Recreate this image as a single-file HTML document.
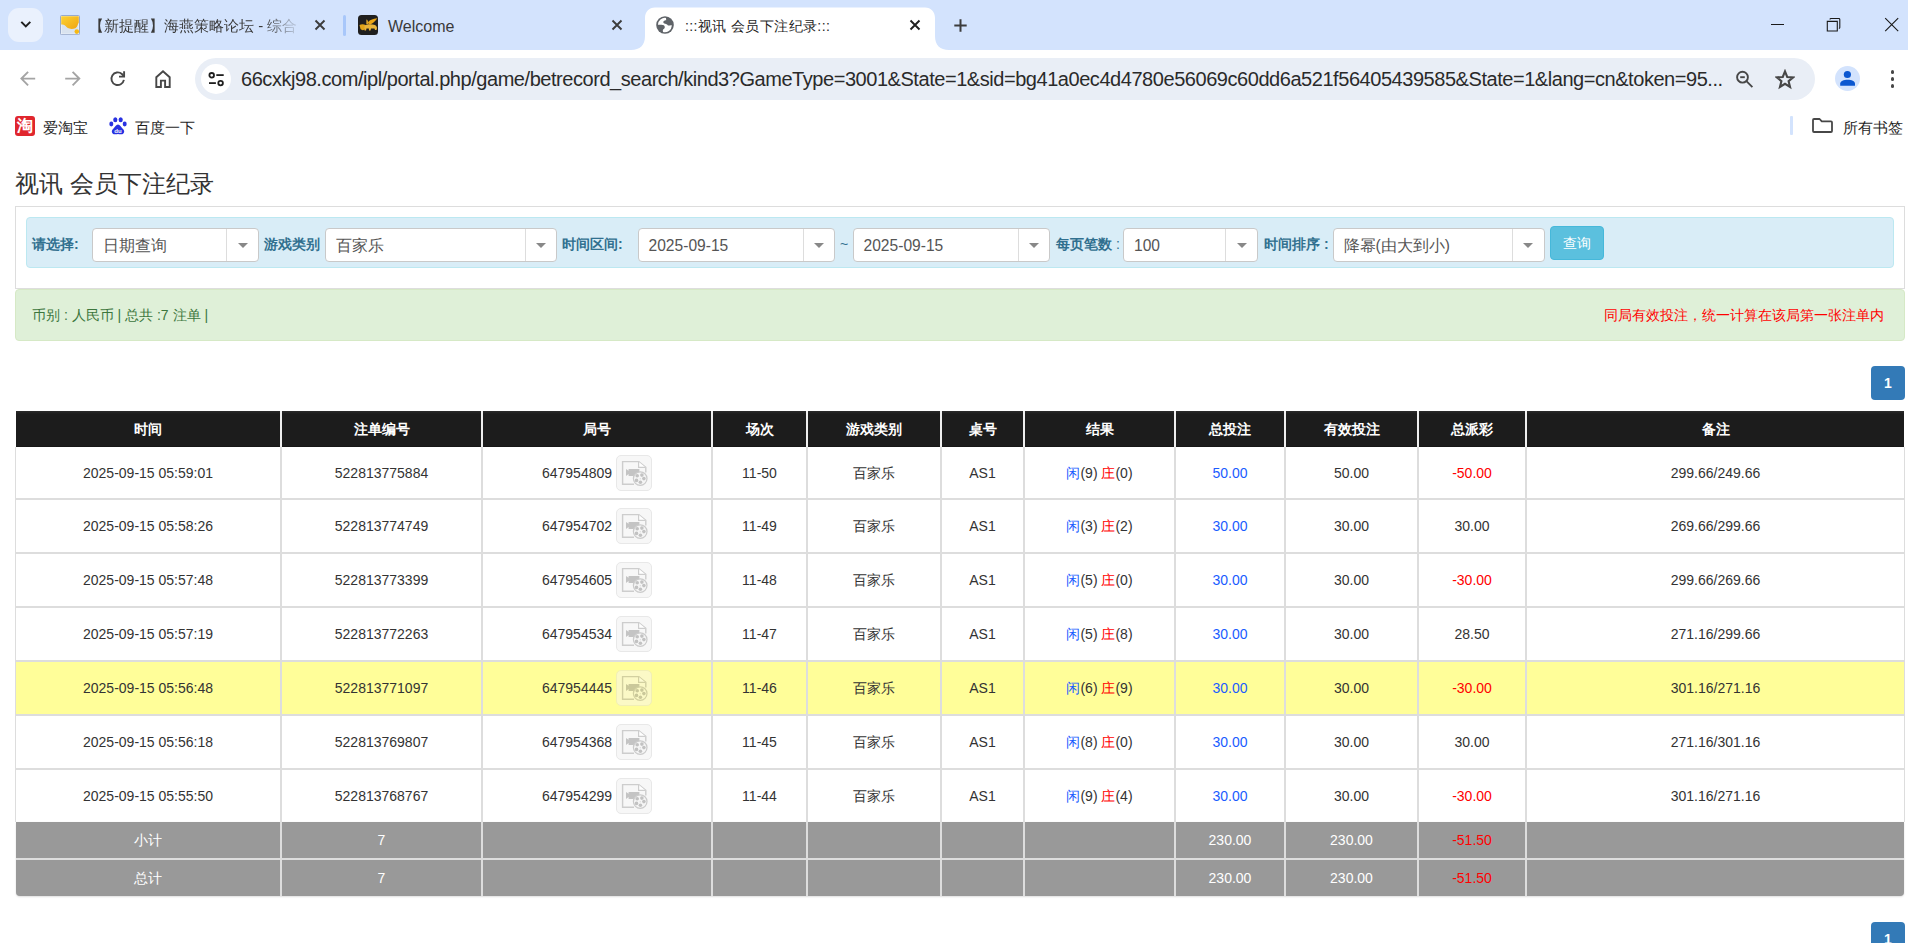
<!DOCTYPE html>
<html><head><meta charset="utf-8">
<style>
*{box-sizing:border-box}
html,body{margin:0;padding:0;width:1908px;height:943px;overflow:hidden;background:#fff;font-family:"Liberation Sans",sans-serif;}
.abs{position:absolute}
svg{display:block}
#tabbar{position:absolute;left:0;top:0;width:1908px;height:50px;background:#d3e3fd}
.tabtxt{position:absolute;font-size:15px;color:#1f1f1f;white-space:nowrap;top:15px;line-height:20px}
.c{position:absolute;text-align:center;font-size:14px;color:#333;white-space:nowrap}
.th{color:#fff;font-weight:bold}
.ft{color:#fff}
.thead{background:linear-gradient(#2b2b2b,#1c1c1c 3px,#1c1c1c 35px,#111 36px)}
.hl{background:#ddd}
.vl{background:#ddd}
.bl{color:#1a5cff}
.rd{color:#f00}
.jn{display:inline-block;vertical-align:middle;position:relative;top:-1px}
.vid{display:inline-block;vertical-align:middle;width:36px;height:36px;margin-left:4px;border:1px solid #e8e8e8;border-radius:5px;background:#f7f7f7;position:relative;top:-1px}
.vid svg{position:absolute;left:-1px;top:-1px}
.lbl{position:absolute;top:236px;font-size:14px;font-weight:bold;color:#31708f;white-space:nowrap;line-height:16px}
.sel{position:absolute;background:#fff;border:1px solid #c9c9c9;border-radius:4px}
.st{position:absolute;left:10px;top:7.5px;font-size:15.6px;color:#555;white-space:nowrap;line-height:17px}
.sd{position:absolute;top:0;bottom:0;width:1px;background:#ddd}
.caret{position:absolute;top:14px;width:0;height:0;border-left:5px solid transparent;border-right:5px solid transparent;border-top:5px solid #888}
.btn{background:#5bc0de;border:1px solid #46b8da;border-radius:4px;color:#fff;font-size:14px;text-align:center;line-height:32px}
.pg{position:absolute;background:#337ab7;border-radius:4px;color:#fff;font-weight:bold;font-size:14px;text-align:center;line-height:34px}
</style></head>
<body>
<div id="tabbar">
  <!-- tab search -->
  <div class="abs" style="left:8px;top:8px;width:35px;height:34px;border-radius:11px;background:#eaf1fd"></div>
  <svg class="abs" style="left:19.5px;top:19px" width="12" height="12" viewBox="0 0 12 12"><path d="M1.3 2.9L5.8 7.4l4.5-4.5" fill="none" stroke="#1f1f1f" stroke-width="2"/></svg>
  <!-- tab1 -->
  <svg class="abs" style="left:60px;top:15px" width="20" height="20" viewBox="0 0 20 20"><defs><linearGradient id="yg" x1="0" y1="0" x2="1" y2="1"><stop offset="0" stop-color="#fcd232"/><stop offset="1" stop-color="#f0a512"/></linearGradient></defs><rect x="0.5" y="0.5" width="19" height="19.2" rx="1" fill="#eef3fa" stroke="#8ea3c6" stroke-width="0.9"/><rect x="1.6" y="8" width="16.8" height="10.6" fill="#d9e3ef"/><path d="M1.2 1.3H18.8V7.5C18.2 8.5 17.8 9.5 17.5 10.5C16.8 13 14.5 13.9 11.5 13.9C8.5 13.9 6.6 12.6 5.6 11.1C4.6 9.9 2.6 9.5 1.2 9.5Z" fill="url(#yg)"/><circle cx="16.8" cy="16.6" r="2.3" fill="#f6b914"/></svg>
  <div class="tabtxt" style="left:89px;top:15.5px;width:212px;overflow:hidden;color:#3a3a3a;-webkit-mask-image:linear-gradient(90deg,#000 82%,rgba(0,0,0,.3) 95%,transparent 100%)">【新提醒】海燕策略论坛 - 综合</div>
  <svg class="abs" style="left:314px;top:19px" width="12" height="12" viewBox="0 0 12 12"><path d="M1.5 1.5l9 9M10.5 1.5l-9 9" stroke="#3c3c3c" stroke-width="1.9"/></svg>
  <div class="abs" style="left:343px;top:15px;width:3px;height:21px;border-radius:2px;background:#a8c7fa"></div>
  <!-- tab2 -->
  <svg class="abs" style="left:358px;top:15px" width="20" height="20" viewBox="0 0 20 20"><rect x="0" y="0" width="20" height="20" rx="3.5" fill="#1f1f1f"/><g fill="#e0a41a"><path d="M9.5 8C11 5 15 3.8 19.3 3.3C17.5 6 15 8.5 12 9.5Z" fill="#eaa516"/><path d="M1.5 10C3 9 6 9 7.5 10L7.5 14C6 15.5 3.5 15.5 2.5 14Z"/><path d="M6.5 10.5C9 9 14 9 17 10C19 11 19.5 13 18.5 15L17 15L16.5 13.5L13 13.5L12.5 15.5L11 15.5L10.8 13.5L8.5 13.5L8 15.5L6.5 15.5Z" fill="#e8b43a"/><path d="M8.3 4.5C9.5 4.5 10.5 6 10 9L8.3 9Z" fill="#d9a52a"/></g></svg>
  <div class="tabtxt" style="left:388px;top:16.5px;font-size:16px;color:#3a3a3a">Welcome</div>
  <svg class="abs" style="left:611px;top:19px" width="12" height="12" viewBox="0 0 12 12"><path d="M1.5 1.5l9 9M10.5 1.5l-9 9" stroke="#3c3c3c" stroke-width="1.9"/></svg>
  <!-- active tab -->
  <svg class="abs" style="left:631px;top:7px" width="335" height="43" viewBox="0 0 335 43"><path d="M0 43c9 0 14-5 14-14V11c0-6 4-10.5 10-10.5h270c6 0 10 4.5 10 10.5v18c0 9 5 14 14 14z" fill="#fff"/></svg>
  <svg class="abs" style="left:656px;top:16px" width="18" height="18" viewBox="0 0 18 18"><circle cx="9" cy="9" r="8.8" fill="#5f6368"/><path d="M10 1.9L10.2 4.3C9 4.3 7.3 4.8 7.3 6.3C7.3 7.5 9 7.8 10.5 8.2C11.5 8.5 11.5 9.5 12.8 9.6C14 9.7 14.5 9 15.9 9.6A7.2 7.2 0 0 1 7 16.1L6.8 14.2C6.8 13 8.8 13.2 8.8 11.3C8.8 9.5 7.3 8.8 5.5 8.8L1.9 8.8A7.2 7.2 0 0 1 10 1.9Z" fill="#fff"/></svg>
  <div class="tabtxt" style="left:685px;font-size:14px;letter-spacing:0.4px;top:16px">:::视讯 会员下注纪录:::</div>
  <svg class="abs" style="left:909px;top:19px" width="12" height="12" viewBox="0 0 12 12"><path d="M1.5 1.5l9 9M10.5 1.5l-9 9" stroke="#1f1f1f" stroke-width="1.9"/></svg>
  <svg class="abs" style="left:954px;top:19px" width="13" height="13" viewBox="0 0 13 13"><path d="M6.5 0.3v12.4M0.3 6.5h12.4" stroke="#3c3c3c" stroke-width="2"/></svg>
  <!-- window controls -->
  <div class="abs" style="left:1771px;top:24px;width:13px;height:1px;background:#1a1a1a"></div>
  <svg class="abs" style="left:1826px;top:17px" width="16" height="16" viewBox="0 0 16 16"><path d="M1.3 4.4h10v9.6h-10z" fill="none" stroke="#1a1a1a" stroke-width="1.1"/><path d="M4 2.4c0-.5.4-.9.9-.9h8c.5 0 .9.4.9.9v8.1c0 .5-.4.9-.9.9" fill="none" stroke="#1a1a1a" stroke-width="1.1"/></svg>
  <svg class="abs" style="left:1884px;top:17px" width="16" height="16" viewBox="0 0 16 16"><path d="M1.2 1.2l13 13M14.2 1.2l-13 13" stroke="#1a1a1a" stroke-width="1.1"/></svg>
</div>
<!-- toolbar -->
<div class="abs" style="left:0;top:50px;width:1908px;height:58px;background:#fff;border-top-left-radius:10px"></div>
<svg class="abs" style="left:19px;top:70px" width="18" height="18" viewBox="0 0 18 18"><path d="M16.2 8.6H3.2M9.1 1.9L2.4 8.6l6.7 6.7" fill="none" stroke="#a4a4a4" stroke-width="1.9"/></svg>
<svg class="abs" style="left:63px;top:70px" width="18" height="18" viewBox="0 0 18 18"><path d="M2.2 8.6h13M9.6 1.9l6.7 6.7-6.7 6.7" fill="none" stroke="#a4a4a4" stroke-width="1.9"/></svg>
<svg class="abs" style="left:108px;top:70px" width="18" height="18" viewBox="0 0 18 18"><path d="M15.9 9.9A6.3 6.3 0 1 1 13.9 4L16 6.3" fill="none" stroke="#474747" stroke-width="1.9"/><path d="M16.1 1.2V6.6H11" fill="none" stroke="#474747" stroke-width="1.9" stroke-linejoin="miter"/></svg>
<svg class="abs" style="left:153.5px;top:69px" width="18" height="20" viewBox="0 0 18 20"><path d="M2.3 18V8.2L9 2.2l6.7 6V18h-4.6v-6.4H6.9V18z" fill="none" stroke="#474747" stroke-width="1.9" stroke-linejoin="miter"/></svg>
<div class="abs" style="left:195px;top:58px;width:1620px;height:42px;border-radius:21px;background:#e9eef6"></div>
<div class="abs" style="left:201px;top:64px;width:30px;height:30px;border-radius:50%;background:#fff"></div>
<svg class="abs" style="left:207px;top:71px" width="18" height="16" viewBox="0 0 18 16"><circle cx="4.7" cy="4.3" r="2.3" fill="none" stroke="#1f1f1f" stroke-width="1.8"/><path d="M9.3 4.1h7.4" stroke="#1f1f1f" stroke-width="1.8"/><circle cx="13.6" cy="12.1" r="2.3" fill="none" stroke="#1f1f1f" stroke-width="1.8"/><path d="M2 12.1h6.9" stroke="#1f1f1f" stroke-width="1.8"/></svg>
<div class="abs" id="url" style="left:241px;top:68px;font-size:20px;letter-spacing:-0.45px;line-height:22px;color:#2a2a2a;white-space:nowrap">66cxkj98.com/ipl/portal.php/game/betrecord_search/kind3?GameType=3001&amp;State=1&amp;sid=bg41a0ec4d4780e56069c60dd6a521f56405439585&amp;State=1&amp;lang=cn&amp;token=95...</div>
<svg class="abs" style="left:1735px;top:70px" width="20" height="20" viewBox="0 0 20 20"><circle cx="7.5" cy="7.2" r="5.4" fill="none" stroke="#474747" stroke-width="1.9"/><path d="M5.2 7.2h4.6" stroke="#474747" stroke-width="1.9"/><path d="M11.4 11.1l6 6.1" stroke="#474747" stroke-width="1.9"/></svg>
<svg class="abs" style="left:1775px;top:69px" width="20" height="21" viewBox="0 0 20 21"><path d="M10.00 2.40 L12.22 7.94 L18.18 8.34 L13.60 12.17 L15.05 17.96 L10.00 14.78 L4.95 17.96 L6.40 12.17 L1.82 8.34 L7.78 7.94Z" fill="none" stroke="#474747" stroke-width="2.1" stroke-linejoin="miter" stroke-miterlimit="10"/></svg>
<div class="abs" style="left:1835px;top:66px;width:25px;height:25px;border-radius:50%;background:#d3e3fd"></div>
<svg class="abs" style="left:1838px;top:69px" width="19" height="19" viewBox="0 0 19 19"><circle cx="9.4" cy="5.5" r="3.6" fill="#0b57d0"/><path d="M2.2 16.8V14.6C2.2 12.2 5.8 10.8 9.6 10.8S17 12.2 17 14.6V16.8Z" fill="#0b57d0"/></svg>
<div class="abs" style="left:1890.6px;top:70.1px;width:3.9px;height:3.9px;border-radius:50%;background:#474747"></div>
<div class="abs" style="left:1890.6px;top:76.9px;width:3.9px;height:3.9px;border-radius:50%;background:#474747"></div>
<div class="abs" style="left:1890.6px;top:83.7px;width:3.9px;height:3.9px;border-radius:50%;background:#474747"></div>
<!-- bookmarks -->
<div class="abs" style="left:15px;top:116px;width:20px;height:20px;border-radius:3px;background:#e0262d;color:#fff;font-size:16px;font-weight:bold;line-height:20px;text-align:center;overflow:hidden">淘</div>
<div class="abs" style="left:43px;top:118.5px;font-size:15px;line-height:18px;color:#1f1f1f">爱淘宝</div>
<svg class="abs" style="left:109px;top:117px" width="18" height="18" viewBox="0 0 18 18"><ellipse cx="2.3" cy="7" rx="2" ry="2.4" fill="#2932e1"/><ellipse cx="6.3" cy="2.8" rx="2.1" ry="2.5" fill="#2932e1"/><ellipse cx="11.7" cy="2.8" rx="2.1" ry="2.5" fill="#2932e1"/><ellipse cx="15.7" cy="7" rx="2" ry="2.4" fill="#2932e1"/><path d="M9 7.5c2 0 3 2.5 4.5 4s2 2.5 1.5 4c-.5 1.6-2 2-3.5 1.8c-1-.1-1.7-.4-2.5-.4s-1.5.3-2.5.4C5 17.5 3.5 17 3 15.5s0-2.5 1.5-4S7 7.5 9 7.5z" fill="#2932e1"/><text x="9" y="16" font-size="6" font-family="Liberation Sans" font-weight="bold" fill="#fff" text-anchor="middle">du</text></svg>
<div class="abs" style="left:135px;top:118.5px;font-size:15px;line-height:18px;color:#1f1f1f">百度一下</div>
<div class="abs" style="left:1790px;top:116px;width:2.5px;height:19px;border-radius:1px;background:#d3e3fd"></div>
<svg class="abs" style="left:1812px;top:118px" width="21" height="17" viewBox="0 0 21 17"><path d="M1 2c0-.6.4-1 1-1h5.6l2.2 2.4H19c.6 0 1 .4 1 1V13c0 .6-.4 1-1 1H2c-.6 0-1-.4-1-1z" fill="none" stroke="#474747" stroke-width="1.8" stroke-linejoin="round"/></svg>
<div class="abs" style="left:1843px;top:118.5px;font-size:15px;line-height:18px;color:#1f1f1f">所有书签</div>

<!-- page -->
<div class="abs" style="left:15px;top:170px;font-size:24px;line-height:28px;color:#333;white-space:nowrap">视讯 会员下注纪录</div>
<div class="abs" style="left:15px;top:206px;width:1890px;height:83px;border:1px solid #ddd"></div>
<div class="abs" style="left:26px;top:217px;width:1868px;height:51px;border:1px solid #bce8f1;background:#d9edf7;border-radius:4px"></div>
<div class="lbl" style="left:32px">请选择:</div>
<div class="sel" style="left:92px;top:228px;width:167px;height:34px"><span class="st">日期查询</span><span class="sd" style="left:133px"></span><span class="caret" style="left:144.5px"></span></div>
<div class="lbl" style="left:264px">游戏类别</div>
<div class="sel" style="left:324.5px;top:228px;width:232.5px;height:34px"><span class="st">百家乐</span><span class="sd" style="left:199.0px"></span><span class="caret" style="left:210.25px"></span></div>
<div class="lbl" style="left:562px">时间区间:</div>
<div class="sel" style="left:637.5px;top:228px;width:197.5px;height:34px"><span class="st">2025-09-15</span><span class="sd" style="left:164.0px"></span><span class="caret" style="left:175.25px"></span></div>
<div class="abs" style="left:840px;top:236px;font-size:14px;color:#31708f">~</div>
<div class="sel" style="left:852.5px;top:228px;width:197.5px;height:34px"><span class="st">2025-09-15</span><span class="sd" style="left:164.0px"></span><span class="caret" style="left:175.25px"></span></div>
<div class="lbl" style="left:1056px">每页笔数 <span style="font-weight:normal">:</span></div>
<div class="sel" style="left:1123px;top:228px;width:135px;height:34px"><span class="st">100</span><span class="sd" style="left:101px"></span><span class="caret" style="left:112.5px"></span></div>
<div class="lbl" style="left:1264px">时间排序 :</div>
<div class="sel" style="left:1332.5px;top:228px;width:212.0px;height:34px"><span class="st">降幂(由大到小)</span><span class="sd" style="left:178.0px"></span><span class="caret" style="left:189.5px"></span></div>
<div class="abs btn" style="left:1550px;top:226px;width:54px;height:34px">查询</div>
<div class="abs" style="left:15px;top:289px;width:1890px;height:52px;border:1px solid #d6e9c6;background:#dff0d8;border-radius:4px"></div>
<div class="abs" style="left:32px;top:307px;font-size:14px;line-height:16px;color:#3c763d;white-space:nowrap">币别 : 人民币 | 总共 :7 注单 |</div>
<div class="abs" style="left:1604px;top:307px;font-size:14px;line-height:16px;color:#f00;white-space:nowrap">同局有效投注，统一计算在该局第一张注单内</div>
<div class="pg" style="left:1871px;top:366px;width:34px;height:34px">1</div>
<div class="abs thead" style="left:16px;top:411px;width:1888px;height:36px"></div>
<div class="c th" style="left:15px;top:411px;width:266px;height:36px;line-height:36px">时间</div>
<div class="c th" style="left:281px;top:411px;width:201px;height:36px;line-height:36px">注单编号</div>
<div class="c th" style="left:482px;top:411px;width:230px;height:36px;line-height:36px">局号</div>
<div class="c th" style="left:712px;top:411px;width:95px;height:36px;line-height:36px">场次</div>
<div class="c th" style="left:807px;top:411px;width:134px;height:36px;line-height:36px">游戏类别</div>
<div class="c th" style="left:941px;top:411px;width:83px;height:36px;line-height:36px">桌号</div>
<div class="c th" style="left:1024px;top:411px;width:151px;height:36px;line-height:36px">结果</div>
<div class="c th" style="left:1175px;top:411px;width:110px;height:36px;line-height:36px">总投注</div>
<div class="c th" style="left:1285px;top:411px;width:133px;height:36px;line-height:36px">有效投注</div>
<div class="c th" style="left:1418px;top:411px;width:108px;height:36px;line-height:36px">总派彩</div>
<div class="c th" style="left:1526px;top:411px;width:379px;height:36px;line-height:36px">备注</div>
<div class="abs" style="left:15px;top:447px;width:1890px;height:375px;border-left:1px solid #ddd;border-right:1px solid #ddd"></div>
<div class="abs" style="left:16px;top:661px;width:1888px;height:54px;background:#fffe99"></div>
<div class="abs hl" style="left:16px;top:498px;width:1888px;height:2px"></div>
<div class="abs hl" style="left:16px;top:552px;width:1888px;height:2px"></div>
<div class="abs hl" style="left:16px;top:606px;width:1888px;height:2px"></div>
<div class="abs hl" style="left:16px;top:660px;width:1888px;height:2px"></div>
<div class="abs hl" style="left:16px;top:714px;width:1888px;height:2px"></div>
<div class="abs hl" style="left:16px;top:768px;width:1888px;height:2px"></div>
<div class="c " style="left:15px;top:448px;width:266px;height:50px;line-height:50px">2025-09-15 05:59:01</div>
<div class="c " style="left:281px;top:448px;width:201px;height:50px;line-height:50px">522813775884</div>
<div class="c " style="left:482px;top:448px;width:230px;height:50px;line-height:50px"><span class="jn">647954809</span><span class="vid"><svg width="36" height="36" viewBox="0 0 36 36"><path d="M29.8 17.6V12.4L22.8 6.6H6.6V29.2H18" fill="none" stroke="#cdcdcd" stroke-width="1.4"/><path d="M22.6 6.8v5.6h7" fill="#fff" stroke="#cdcdcd" stroke-width="1.2"/><path d="M10 14l2.6 1.8v-1.9h10.8v7h-10.8v-1.8l-2.6 1.8z" fill="#c4c4c4"/><circle cx="24.2" cy="23.6" r="6.8" fill="#f5f5f5" stroke="#cbcbcb" stroke-width="1.2"/><circle cx="21.2" cy="20.8" r="1.8" fill="#c2c2c2"/><circle cx="25.9" cy="20.1" r="1.8" fill="#c2c2c2"/><circle cx="27.9" cy="23.6" r="1.8" fill="#c2c2c2"/><circle cx="24.4" cy="27.3" r="1.8" fill="#c2c2c2"/><circle cx="20.5" cy="25.4" r="1.8" fill="#c2c2c2"/><circle cx="24.2" cy="23.8" r="0.5" fill="#c4c4c4"/></svg></span></div>
<div class="c " style="left:712px;top:448px;width:95px;height:50px;line-height:50px">11-50</div>
<div class="c " style="left:807px;top:448px;width:134px;height:50px;line-height:50px">百家乐</div>
<div class="c " style="left:941px;top:448px;width:83px;height:50px;line-height:50px">AS1</div>
<div class="c " style="left:1024px;top:448px;width:151px;height:50px;line-height:50px"><span class="bl">闲</span>(9) <span class="rd">庄</span>(0)</div>
<div class="c " style="left:1175px;top:448px;width:110px;height:50px;line-height:50px"><span class="bl">50.00</span></div>
<div class="c " style="left:1285px;top:448px;width:133px;height:50px;line-height:50px">50.00</div>
<div class="c " style="left:1418px;top:448px;width:108px;height:50px;line-height:50px"><span class="rd">-50.00</span></div>
<div class="c " style="left:1526px;top:448px;width:379px;height:50px;line-height:50px">299.66/249.66</div>
<div class="c " style="left:15px;top:500px;width:266px;height:52px;line-height:52px">2025-09-15 05:58:26</div>
<div class="c " style="left:281px;top:500px;width:201px;height:52px;line-height:52px">522813774749</div>
<div class="c " style="left:482px;top:500px;width:230px;height:52px;line-height:52px"><span class="jn">647954702</span><span class="vid"><svg width="36" height="36" viewBox="0 0 36 36"><path d="M29.8 17.6V12.4L22.8 6.6H6.6V29.2H18" fill="none" stroke="#cdcdcd" stroke-width="1.4"/><path d="M22.6 6.8v5.6h7" fill="#fff" stroke="#cdcdcd" stroke-width="1.2"/><path d="M10 14l2.6 1.8v-1.9h10.8v7h-10.8v-1.8l-2.6 1.8z" fill="#c4c4c4"/><circle cx="24.2" cy="23.6" r="6.8" fill="#f5f5f5" stroke="#cbcbcb" stroke-width="1.2"/><circle cx="21.2" cy="20.8" r="1.8" fill="#c2c2c2"/><circle cx="25.9" cy="20.1" r="1.8" fill="#c2c2c2"/><circle cx="27.9" cy="23.6" r="1.8" fill="#c2c2c2"/><circle cx="24.4" cy="27.3" r="1.8" fill="#c2c2c2"/><circle cx="20.5" cy="25.4" r="1.8" fill="#c2c2c2"/><circle cx="24.2" cy="23.8" r="0.5" fill="#c4c4c4"/></svg></span></div>
<div class="c " style="left:712px;top:500px;width:95px;height:52px;line-height:52px">11-49</div>
<div class="c " style="left:807px;top:500px;width:134px;height:52px;line-height:52px">百家乐</div>
<div class="c " style="left:941px;top:500px;width:83px;height:52px;line-height:52px">AS1</div>
<div class="c " style="left:1024px;top:500px;width:151px;height:52px;line-height:52px"><span class="bl">闲</span>(3) <span class="rd">庄</span>(2)</div>
<div class="c " style="left:1175px;top:500px;width:110px;height:52px;line-height:52px"><span class="bl">30.00</span></div>
<div class="c " style="left:1285px;top:500px;width:133px;height:52px;line-height:52px">30.00</div>
<div class="c " style="left:1418px;top:500px;width:108px;height:52px;line-height:52px"><span class="">30.00</span></div>
<div class="c " style="left:1526px;top:500px;width:379px;height:52px;line-height:52px">269.66/299.66</div>
<div class="c " style="left:15px;top:554px;width:266px;height:52px;line-height:52px">2025-09-15 05:57:48</div>
<div class="c " style="left:281px;top:554px;width:201px;height:52px;line-height:52px">522813773399</div>
<div class="c " style="left:482px;top:554px;width:230px;height:52px;line-height:52px"><span class="jn">647954605</span><span class="vid"><svg width="36" height="36" viewBox="0 0 36 36"><path d="M29.8 17.6V12.4L22.8 6.6H6.6V29.2H18" fill="none" stroke="#cdcdcd" stroke-width="1.4"/><path d="M22.6 6.8v5.6h7" fill="#fff" stroke="#cdcdcd" stroke-width="1.2"/><path d="M10 14l2.6 1.8v-1.9h10.8v7h-10.8v-1.8l-2.6 1.8z" fill="#c4c4c4"/><circle cx="24.2" cy="23.6" r="6.8" fill="#f5f5f5" stroke="#cbcbcb" stroke-width="1.2"/><circle cx="21.2" cy="20.8" r="1.8" fill="#c2c2c2"/><circle cx="25.9" cy="20.1" r="1.8" fill="#c2c2c2"/><circle cx="27.9" cy="23.6" r="1.8" fill="#c2c2c2"/><circle cx="24.4" cy="27.3" r="1.8" fill="#c2c2c2"/><circle cx="20.5" cy="25.4" r="1.8" fill="#c2c2c2"/><circle cx="24.2" cy="23.8" r="0.5" fill="#c4c4c4"/></svg></span></div>
<div class="c " style="left:712px;top:554px;width:95px;height:52px;line-height:52px">11-48</div>
<div class="c " style="left:807px;top:554px;width:134px;height:52px;line-height:52px">百家乐</div>
<div class="c " style="left:941px;top:554px;width:83px;height:52px;line-height:52px">AS1</div>
<div class="c " style="left:1024px;top:554px;width:151px;height:52px;line-height:52px"><span class="bl">闲</span>(5) <span class="rd">庄</span>(0)</div>
<div class="c " style="left:1175px;top:554px;width:110px;height:52px;line-height:52px"><span class="bl">30.00</span></div>
<div class="c " style="left:1285px;top:554px;width:133px;height:52px;line-height:52px">30.00</div>
<div class="c " style="left:1418px;top:554px;width:108px;height:52px;line-height:52px"><span class="rd">-30.00</span></div>
<div class="c " style="left:1526px;top:554px;width:379px;height:52px;line-height:52px">299.66/269.66</div>
<div class="c " style="left:15px;top:608px;width:266px;height:52px;line-height:52px">2025-09-15 05:57:19</div>
<div class="c " style="left:281px;top:608px;width:201px;height:52px;line-height:52px">522813772263</div>
<div class="c " style="left:482px;top:608px;width:230px;height:52px;line-height:52px"><span class="jn">647954534</span><span class="vid"><svg width="36" height="36" viewBox="0 0 36 36"><path d="M29.8 17.6V12.4L22.8 6.6H6.6V29.2H18" fill="none" stroke="#cdcdcd" stroke-width="1.4"/><path d="M22.6 6.8v5.6h7" fill="#fff" stroke="#cdcdcd" stroke-width="1.2"/><path d="M10 14l2.6 1.8v-1.9h10.8v7h-10.8v-1.8l-2.6 1.8z" fill="#c4c4c4"/><circle cx="24.2" cy="23.6" r="6.8" fill="#f5f5f5" stroke="#cbcbcb" stroke-width="1.2"/><circle cx="21.2" cy="20.8" r="1.8" fill="#c2c2c2"/><circle cx="25.9" cy="20.1" r="1.8" fill="#c2c2c2"/><circle cx="27.9" cy="23.6" r="1.8" fill="#c2c2c2"/><circle cx="24.4" cy="27.3" r="1.8" fill="#c2c2c2"/><circle cx="20.5" cy="25.4" r="1.8" fill="#c2c2c2"/><circle cx="24.2" cy="23.8" r="0.5" fill="#c4c4c4"/></svg></span></div>
<div class="c " style="left:712px;top:608px;width:95px;height:52px;line-height:52px">11-47</div>
<div class="c " style="left:807px;top:608px;width:134px;height:52px;line-height:52px">百家乐</div>
<div class="c " style="left:941px;top:608px;width:83px;height:52px;line-height:52px">AS1</div>
<div class="c " style="left:1024px;top:608px;width:151px;height:52px;line-height:52px"><span class="bl">闲</span>(5) <span class="rd">庄</span>(8)</div>
<div class="c " style="left:1175px;top:608px;width:110px;height:52px;line-height:52px"><span class="bl">30.00</span></div>
<div class="c " style="left:1285px;top:608px;width:133px;height:52px;line-height:52px">30.00</div>
<div class="c " style="left:1418px;top:608px;width:108px;height:52px;line-height:52px"><span class="">28.50</span></div>
<div class="c " style="left:1526px;top:608px;width:379px;height:52px;line-height:52px">271.16/299.66</div>
<div class="c " style="left:15px;top:662px;width:266px;height:52px;line-height:52px">2025-09-15 05:56:48</div>
<div class="c " style="left:281px;top:662px;width:201px;height:52px;line-height:52px">522813771097</div>
<div class="c " style="left:482px;top:662px;width:230px;height:52px;line-height:52px"><span class="jn">647954445</span><span class="vid" style="background:#fbf9c6;border-color:#f1efb6"><svg width="36" height="36" viewBox="0 0 36 36"><path d="M29.8 17.6V12.4L22.8 6.6H6.6V29.2H18" fill="none" stroke="#d2d0a0" stroke-width="1.4"/><path d="M22.6 6.8v5.6h7" fill="#fdfbd2" stroke="#d2d0a0" stroke-width="1.2"/><path d="M10 14l2.6 1.8v-1.9h10.8v7h-10.8v-1.8l-2.6 1.8z" fill="#cac89a"/><circle cx="24.2" cy="23.6" r="6.8" fill="#fbf9c6" stroke="#d2d0a0" stroke-width="1.2"/><circle cx="21.2" cy="20.8" r="1.8" fill="#cac89a"/><circle cx="25.9" cy="20.1" r="1.8" fill="#cac89a"/><circle cx="27.9" cy="23.6" r="1.8" fill="#cac89a"/><circle cx="24.4" cy="27.3" r="1.8" fill="#cac89a"/><circle cx="20.5" cy="25.4" r="1.8" fill="#cac89a"/><circle cx="24.2" cy="23.8" r="0.5" fill="#cac89a"/></svg></span></div>
<div class="c " style="left:712px;top:662px;width:95px;height:52px;line-height:52px">11-46</div>
<div class="c " style="left:807px;top:662px;width:134px;height:52px;line-height:52px">百家乐</div>
<div class="c " style="left:941px;top:662px;width:83px;height:52px;line-height:52px">AS1</div>
<div class="c " style="left:1024px;top:662px;width:151px;height:52px;line-height:52px"><span class="bl">闲</span>(6) <span class="rd">庄</span>(9)</div>
<div class="c " style="left:1175px;top:662px;width:110px;height:52px;line-height:52px"><span class="bl">30.00</span></div>
<div class="c " style="left:1285px;top:662px;width:133px;height:52px;line-height:52px">30.00</div>
<div class="c " style="left:1418px;top:662px;width:108px;height:52px;line-height:52px"><span class="rd">-30.00</span></div>
<div class="c " style="left:1526px;top:662px;width:379px;height:52px;line-height:52px">301.16/271.16</div>
<div class="c " style="left:15px;top:716px;width:266px;height:52px;line-height:52px">2025-09-15 05:56:18</div>
<div class="c " style="left:281px;top:716px;width:201px;height:52px;line-height:52px">522813769807</div>
<div class="c " style="left:482px;top:716px;width:230px;height:52px;line-height:52px"><span class="jn">647954368</span><span class="vid"><svg width="36" height="36" viewBox="0 0 36 36"><path d="M29.8 17.6V12.4L22.8 6.6H6.6V29.2H18" fill="none" stroke="#cdcdcd" stroke-width="1.4"/><path d="M22.6 6.8v5.6h7" fill="#fff" stroke="#cdcdcd" stroke-width="1.2"/><path d="M10 14l2.6 1.8v-1.9h10.8v7h-10.8v-1.8l-2.6 1.8z" fill="#c4c4c4"/><circle cx="24.2" cy="23.6" r="6.8" fill="#f5f5f5" stroke="#cbcbcb" stroke-width="1.2"/><circle cx="21.2" cy="20.8" r="1.8" fill="#c2c2c2"/><circle cx="25.9" cy="20.1" r="1.8" fill="#c2c2c2"/><circle cx="27.9" cy="23.6" r="1.8" fill="#c2c2c2"/><circle cx="24.4" cy="27.3" r="1.8" fill="#c2c2c2"/><circle cx="20.5" cy="25.4" r="1.8" fill="#c2c2c2"/><circle cx="24.2" cy="23.8" r="0.5" fill="#c4c4c4"/></svg></span></div>
<div class="c " style="left:712px;top:716px;width:95px;height:52px;line-height:52px">11-45</div>
<div class="c " style="left:807px;top:716px;width:134px;height:52px;line-height:52px">百家乐</div>
<div class="c " style="left:941px;top:716px;width:83px;height:52px;line-height:52px">AS1</div>
<div class="c " style="left:1024px;top:716px;width:151px;height:52px;line-height:52px"><span class="bl">闲</span>(8) <span class="rd">庄</span>(0)</div>
<div class="c " style="left:1175px;top:716px;width:110px;height:52px;line-height:52px"><span class="bl">30.00</span></div>
<div class="c " style="left:1285px;top:716px;width:133px;height:52px;line-height:52px">30.00</div>
<div class="c " style="left:1418px;top:716px;width:108px;height:52px;line-height:52px"><span class="">30.00</span></div>
<div class="c " style="left:1526px;top:716px;width:379px;height:52px;line-height:52px">271.16/301.16</div>
<div class="c " style="left:15px;top:770px;width:266px;height:53px;line-height:53px">2025-09-15 05:55:50</div>
<div class="c " style="left:281px;top:770px;width:201px;height:53px;line-height:53px">522813768767</div>
<div class="c " style="left:482px;top:770px;width:230px;height:53px;line-height:53px"><span class="jn">647954299</span><span class="vid"><svg width="36" height="36" viewBox="0 0 36 36"><path d="M29.8 17.6V12.4L22.8 6.6H6.6V29.2H18" fill="none" stroke="#cdcdcd" stroke-width="1.4"/><path d="M22.6 6.8v5.6h7" fill="#fff" stroke="#cdcdcd" stroke-width="1.2"/><path d="M10 14l2.6 1.8v-1.9h10.8v7h-10.8v-1.8l-2.6 1.8z" fill="#c4c4c4"/><circle cx="24.2" cy="23.6" r="6.8" fill="#f5f5f5" stroke="#cbcbcb" stroke-width="1.2"/><circle cx="21.2" cy="20.8" r="1.8" fill="#c2c2c2"/><circle cx="25.9" cy="20.1" r="1.8" fill="#c2c2c2"/><circle cx="27.9" cy="23.6" r="1.8" fill="#c2c2c2"/><circle cx="24.4" cy="27.3" r="1.8" fill="#c2c2c2"/><circle cx="20.5" cy="25.4" r="1.8" fill="#c2c2c2"/><circle cx="24.2" cy="23.8" r="0.5" fill="#c4c4c4"/></svg></span></div>
<div class="c " style="left:712px;top:770px;width:95px;height:53px;line-height:53px">11-44</div>
<div class="c " style="left:807px;top:770px;width:134px;height:53px;line-height:53px">百家乐</div>
<div class="c " style="left:941px;top:770px;width:83px;height:53px;line-height:53px">AS1</div>
<div class="c " style="left:1024px;top:770px;width:151px;height:53px;line-height:53px"><span class="bl">闲</span>(9) <span class="rd">庄</span>(4)</div>
<div class="c " style="left:1175px;top:770px;width:110px;height:53px;line-height:53px"><span class="bl">30.00</span></div>
<div class="c " style="left:1285px;top:770px;width:133px;height:53px;line-height:53px">30.00</div>
<div class="c " style="left:1418px;top:770px;width:108px;height:53px;line-height:53px"><span class="rd">-30.00</span></div>
<div class="c " style="left:1526px;top:770px;width:379px;height:53px;line-height:53px">301.16/271.16</div>
<div class="abs" style="left:16px;top:822px;width:1888px;height:74px;background:#999;border-radius:0 0 4px 4px;box-shadow:0 1px 2px rgba(0,0,0,.12),0 0 1px rgba(0,0,0,.1)"></div>
<div class="abs hl" style="left:16px;top:858px;width:1888px;height:2px"></div>
<div class="abs vl" style="left:280px;top:447px;width:2px;height:449px"></div>
<div class="abs" style="left:280px;top:411px;width:2px;height:36px;background:#eee"></div>
<div class="abs vl" style="left:481px;top:447px;width:2px;height:449px"></div>
<div class="abs" style="left:481px;top:411px;width:2px;height:36px;background:#eee"></div>
<div class="abs vl" style="left:711px;top:447px;width:2px;height:449px"></div>
<div class="abs" style="left:711px;top:411px;width:2px;height:36px;background:#eee"></div>
<div class="abs vl" style="left:806px;top:447px;width:2px;height:449px"></div>
<div class="abs" style="left:806px;top:411px;width:2px;height:36px;background:#eee"></div>
<div class="abs vl" style="left:940px;top:447px;width:2px;height:449px"></div>
<div class="abs" style="left:940px;top:411px;width:2px;height:36px;background:#eee"></div>
<div class="abs vl" style="left:1023px;top:447px;width:2px;height:449px"></div>
<div class="abs" style="left:1023px;top:411px;width:2px;height:36px;background:#eee"></div>
<div class="abs vl" style="left:1174px;top:447px;width:2px;height:449px"></div>
<div class="abs" style="left:1174px;top:411px;width:2px;height:36px;background:#eee"></div>
<div class="abs vl" style="left:1284px;top:447px;width:2px;height:449px"></div>
<div class="abs" style="left:1284px;top:411px;width:2px;height:36px;background:#eee"></div>
<div class="abs vl" style="left:1417px;top:447px;width:2px;height:449px"></div>
<div class="abs" style="left:1417px;top:411px;width:2px;height:36px;background:#eee"></div>
<div class="abs vl" style="left:1525px;top:447px;width:2px;height:449px"></div>
<div class="abs" style="left:1525px;top:411px;width:2px;height:36px;background:#eee"></div>
<div class="c ft" style="left:15px;top:822px;width:266px;height:36px;line-height:36px">小计</div>
<div class="c ft" style="left:281px;top:822px;width:201px;height:36px;line-height:36px">7</div>
<div class="c ft" style="left:1175px;top:822px;width:110px;height:36px;line-height:36px">230.00</div>
<div class="c ft" style="left:1285px;top:822px;width:133px;height:36px;line-height:36px">230.00</div>
<div class="c ft" style="left:1418px;top:822px;width:108px;height:36px;line-height:36px"><span class="rd">-51.50</span></div>
<div class="c ft" style="left:15px;top:860px;width:266px;height:36px;line-height:36px">总计</div>
<div class="c ft" style="left:281px;top:860px;width:201px;height:36px;line-height:36px">7</div>
<div class="c ft" style="left:1175px;top:860px;width:110px;height:36px;line-height:36px">230.00</div>
<div class="c ft" style="left:1285px;top:860px;width:133px;height:36px;line-height:36px">230.00</div>
<div class="c ft" style="left:1418px;top:860px;width:108px;height:36px;line-height:36px"><span class="rd">-51.50</span></div>
<div class="pg" style="left:1871px;top:922px;width:34px;height:34px">1</div>
</body></html>
